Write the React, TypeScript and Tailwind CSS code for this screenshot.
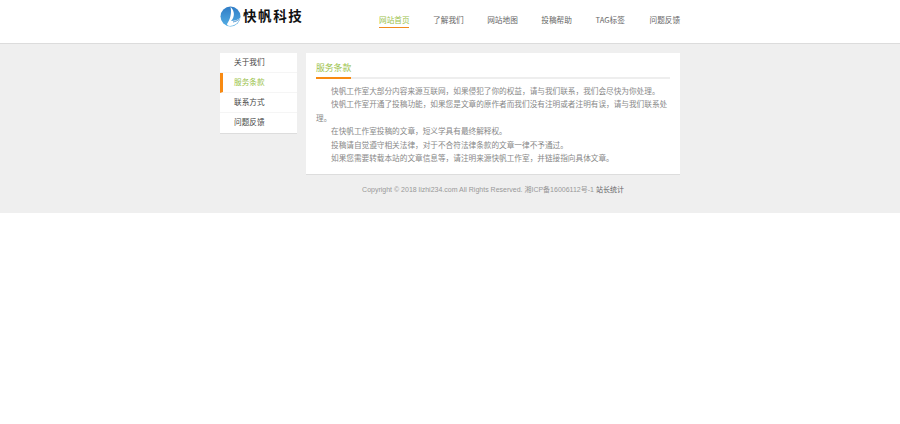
const font = { fontFamily: '"Noto Sans CJK SC", "Liberation Sans", sans-serif' };

const navItems = ["网站首页", "了解我们", "网站地图", "投稿帮助", "TAG标签", "问题反馈"];
const sideItems = ["关于我们", "服务条款", "联系方式", "问题反馈"];
const paragraphs = [
  "快帆工作室大部分内容来源互联网，如果侵犯了你的权益，请与我们联系，我们会尽快为你处理。",
  "快帆工作室开通了投稿功能，如果您是文章的原作者而我们没有注明或者注明有误，请与我们联系处理。",
  "在快帆工作室投稿的文章，短义学具有最终解释权。",
  "投稿请自觉遵守相关法律，对于不合符法律条款的文章一律不予通过。",
  "如果您需要转载本站的文章信息等，请注明来源快帆工作室，并链接指向具体文章。",
];

function Logo() {
  return (
    <div className="flex items-center h-[20px] mt-[6px]">
      <svg width="21" height="21" viewBox="0 0 21 21" className="shrink-0">
        <defs>
          <linearGradient id="g" x1="0" y1="0" x2="0" y2="1">
            <stop offset="0" stopColor="#2f7cc6" />
            <stop offset="1" stopColor="#54aee4" />
          </linearGradient>
        </defs>
        <circle cx="10.5" cy="10.5" r="10" fill="url(#g)" />
        <path d="M10.5 1 C15 5 15 11 11 15 C14 15 18 14 20 12 C19 17 14 20 10 20 C8 20 7 19 7 18 C10 14 12 7 10.5 1 Z" fill="#fff" />
        <path d="M13 16 C15 15.5 17 15 19 13.5" stroke="#2a7cc4" strokeWidth="0.8" fill="none" />
      </svg>
      <span className="ml-[2px] text-[13.5px] leading-none font-bold text-[#111] tracking-[1.6px]">快帆科技</span>
    </div>
  );
}

export default function App() {
  return (
    <div className="min-h-[424px] bg-white text-[7.65px]" style={font}>
      <header className="h-[44px] bg-white border-b border-[#dcdcdc]">
        <div className="w-[460px] mx-auto flex justify-between">
          <Logo />
          <nav className="flex w-[301px] justify-between pt-[15px]">
            {navItems.map((item, i) => (
              <div
                key={item}
                className={
                  i === 0
                    ? "w-[30.4px] h-[13px] leading-[10px] whitespace-nowrap text-[#9ac24a] border-b border-[#f08a1d]"
                    : "w-[30.4px] h-[13px] leading-[10px] whitespace-nowrap text-[#666]"
                }
              >
                {item}
              </div>
            ))}
          </nav>
        </div>
      </header>
      <main className="h-[169px] bg-[#efefef] pt-[9px]">
        <div className="w-[460px] mx-auto flex justify-between items-start">
          <aside className="w-[77px] bg-white border-b border-[#dddddd]">
            {sideItems.map((item, i) => (
              <div
                key={item}
                className={
                  i === 1
                    ? "h-[20px] leading-[18px] pl-[11px] border-l-[3px] border-b border-l-[#f88a12] border-b-[#f5f5f5] text-[#9ac24a]"
                    : "h-[20px] leading-[18px] pl-[14px] border-b border-[#f5f5f5] text-[#444] last:border-b-0"
                }
              >
                {item}
              </div>
            ))}
          </aside>
          <div className="w-[374px]">
            <section className="h-[122px] bg-white border-b border-[#dddddd] px-[10px]">
              <div className="h-[26px] border-b-2 border-[#eeeeee] pt-[9px]">
                <span className="block w-[35px] h-[17px] leading-[12px] text-[8.8px] whitespace-nowrap text-[#9ac24a] border-b-2 border-[#f88a12]">
                  服务条款
                </span>
              </div>
              <div className="pt-[5px] text-[#888] leading-[13.4px]">
                {paragraphs.map((p) => (
                  <p key={p} className="indent-[15px]">
                    {p}
                  </p>
                ))}
              </div>
            </section>
            <footer className="text-center text-[7px] text-[#999] mt-[10px] leading-[10px] whitespace-nowrap" style={{ fontFamily: '"Liberation Sans", "Noto Sans CJK SC", sans-serif' }}>
              Copyright © 2018 lizhi234.com All Rights Reserved. 湘ICP备16006112号-1 <span className="text-[#666]">站长统计</span>
            </footer>
          </div>
        </div>
      </main>
    </div>
  );
}
